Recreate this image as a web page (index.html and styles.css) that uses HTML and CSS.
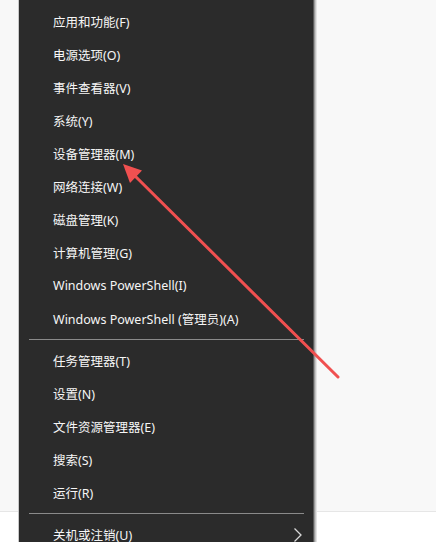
FILE: index.html
```html
<!DOCTYPE html>
<html lang="zh-CN">
<head>
<meta charset="utf-8">
<link rel="stylesheet" href="styles.css">
</head>
<body>
<div class="page">
  <div class="upper"></div>
  <div class="lower"></div>
</div>
<nav class="menu">
  <div class="item">应用和功能(F)</div>
  <div class="item">电源选项(O)</div>
  <div class="item">事件查看器(V)</div>
  <div class="item">系统(Y)</div>
  <div class="item">设备管理器(M)</div>
  <div class="item">网络连接(W)</div>
  <div class="item">磁盘管理(K)</div>
  <div class="item">计算机管理(G)</div>
  <div class="item">Windows PowerShell(I)</div>
  <div class="item">Windows PowerShell (管理员)(A)</div>
  <div class="sep"></div>
  <div class="item">任务管理器(T)</div>
  <div class="item">设置(N)</div>
  <div class="item">文件资源管理器(E)</div>
  <div class="item">搜索(S)</div>
  <div class="item">运行(R)</div>
  <div class="sep"></div>
  <div class="item sub">关机或注销(U)
    <svg class="chev" width="10" height="16" viewBox="0 0 10 16"><path d="M1.5 1.5 L8 8 L1.5 14.5" fill="none" stroke="#d8d8d8" stroke-width="1.3"/></svg>
  </div>
</nav>
<svg class="arrow" width="436" height="542" viewBox="0 0 436 542">
  <line x1="338" y1="377" x2="132" y2="173" stroke="#f05050" stroke-width="3" stroke-linecap="round"/>
  <polygon points="123,164 142,170.5 130,183" fill="#f05050"/>
</svg>
</body>
</html>
```
FILE: styles.css
```css
html, body {
  margin: 0;
  padding: 0;
  width: 436px;
  height: 542px;
  overflow: hidden;
}
body {
  position: relative;
  font-family: "Noto Sans", "Noto Sans CJK SC", sans-serif;
}
.page {
  display: flex;
  flex-direction: column;
  height: 542px;
}
.upper {
  height: 511px;
  background: #f8f8f8;
  border-bottom: 1px solid #e6e6e6;
}
.lower {
  flex: 1;
  background: #ffffff;
}
.menu {
  position: absolute;
  left: 18px;
  top: 0;
  width: 295px;
  height: 560px;
  box-sizing: border-box;
  background: #2b2b2b;
  border-left: 1px solid #c8c8c8;
  padding-top: 5px;
  box-shadow: 1px 0 0 #5a5a5a, 2px 0 0 #9a9a9a, 3px 0 0 #c4c4c4, 4px 0 0 #e2e2e2;
}
.item {
  height: 33px;
  display: flex;
  align-items: center;
  padding-left: 34px;
  padding-right: 12px;
  color: #f6f6f6;
  font-size: 12.5px;
  white-space: nowrap;
}
.sub {
  justify-content: space-between;
}
.chev {
  margin-right: -2px;
}
.sep {
  height: 9px;
  display: flex;
  align-items: center;
  padding: 0 9px 0 10px;
}
.sep::before {
  content: "";
  display: block;
  flex: 1;
  height: 1px;
  background: #8a8a8a;
}
.arrow {
  position: absolute;
  left: 0;
  top: 0;
  pointer-events: none;
}
```
